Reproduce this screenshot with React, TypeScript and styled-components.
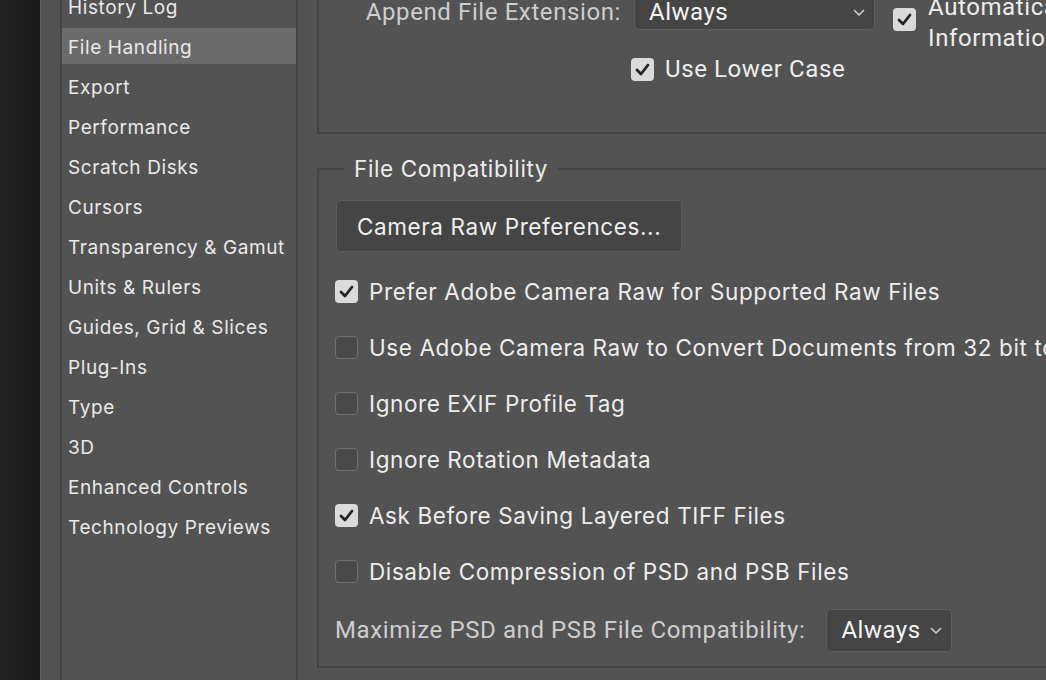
import React from "react";
import styled, { createGlobalStyle } from "styled-components";

const Global = createGlobalStyle`
  html, body { margin: 0; padding: 0; background: #535353; overflow: hidden; }
  #root { height: 680px; }
  * { box-sizing: border-box; }
`;

const Window = styled.div`
  display: flex;
  height: 680px;
  width: 100%;
  overflow: hidden;
  background: #535353;
  font-family: Inter, "Open Sans", sans-serif;
  color: #ebebeb;
`;

const Dock = styled.div`
  flex: none;
  width: 41px;
  background: linear-gradient(to right, #222222, #1a1a1a);
  border-right: 1px solid #5e5e5e;
`;

const SidebarPane = styled.div`
  flex: none;
  padding-left: 19px;
  display: flex;
`;

const NavList = styled.ul`
  list-style: none;
  margin: -12px 0 0;
  padding: 0;
  width: 238px;
  border-left: 2px solid #464646;
  border-right: 2px solid #464646;
`;

const NavItem = styled.li<{ $active?: boolean }>`
  height: 36px;
  margin-bottom: 4px;
  padding: 3px 0 0 6px;
  line-height: 33px;
  font-size: 19px;
  letter-spacing: 0.6px;
  color: #e9e9e9;
  background: ${(p) => (p.$active ? "#6a6a6a" : "transparent")};
  white-space: nowrap;
`;

const MainPane = styled.div`
  flex: 1;
  min-width: 0;
  padding-left: 19px;
  display: flex;
  flex-direction: column;
`;

const UpperGroup = styled.div`
  margin: -6px -60px 0 0;
  border-left: 2px solid #444444;
  border-bottom: 2px solid #444444;
  padding-bottom: 51px;
  display: grid;
  grid-template-columns: 315px 259px auto;
  grid-template-rows: 36px 24px;
  row-gap: 27px;
`;

const FieldLabel = styled.div<{ $align?: string }>`
  font-family: Roboto, "Liberation Sans", sans-serif;
  font-size: 24px;
  letter-spacing: 0.6px;
  color: #cdcdcd;
  white-space: nowrap;
  text-align: ${(p) => p.$align || "left"};
`;

const RightLabel = styled(FieldLabel)`
  padding-right: 13px;
  align-self: center;
`;

const Select = styled.div<{ $w: number; $h: number }>`
  width: ${(p) => p.$w}px;
  height: ${(p) => p.$h}px;
  display: flex;
  align-items: center;
  justify-content: space-between;
  padding: 0 9px 0 14px;
  background: #454545;
  border: 1px solid #5e5e5e;
  border-radius: 5px;
  font-family: Roboto, "Liberation Sans", sans-serif;
  font-size: 24px;
  letter-spacing: 0.5px;
  color: #f3f3f3;
  flex: none;
`;

const AutoItem = styled.div`
  display: flex;
  align-items: flex-start;
  gap: 12px;
  margin-top: -2px;
`;

const AutoText = styled.div`
  font-family: Roboto, "Liberation Sans", sans-serif;
  font-size: 24px;
  letter-spacing: 0.6px;
  line-height: 31px;
  color: #ececec;
  white-space: nowrap;
`;

const CheckRow = styled.div<{ $h?: number; $shift?: number }>`
  display: flex;
  align-items: center;
  gap: 11px;
  height: ${(p) => p.$h ?? 24}px;
  margin-left: ${(p) => p.$shift ?? 0}px;
`;

const Box = styled.span<{ $on?: boolean; $top?: number }>`
  flex: none;
  width: 23px;
  height: 23px;
  border-radius: 4px;
  display: flex;
  align-items: center;
  justify-content: center;
  margin-top: ${(p) => p.$top ?? 0}px;
  background: ${(p) => (p.$on ? "#dadada" : "#4a4a4a")};
  border: ${(p) => (p.$on ? "none" : "1.5px solid #707070")};
`;

const CheckText = styled.span<{ $condensed?: boolean }>`
  font-family: ${(p) =>
    p.$condensed ? 'Roboto, "Liberation Sans", sans-serif' : 'Inter, "Open Sans", sans-serif'};
  font-size: ${(p) => (p.$condensed ? 24 : 22.5)}px;
  letter-spacing: 0.6px;
  color: #ededed;
  white-space: nowrap;
`;

const Group = styled.fieldset`
  margin: 22px -60px 0 0;
  padding: 0 0 14px 16px;
  border: 2px solid #444444;
  min-width: 0;
`;

const Legend = styled.legend`
  margin-left: 9px;
  padding: 0 10px;
  font-size: 22.5px;
  letter-spacing: 0.6px;
  line-height: 26px;
  color: #ececec;
`;

const PushButton = styled.div`
  display: inline-flex;
  align-items: center;
  height: 52px;
  margin: 18px 0 0 1px;
  padding: 0 20px;
  background: #454545;
  border: 1px solid #5c5c5c;
  border-radius: 4px;
  font-size: 22.5px;
  letter-spacing: 0.6px;
  color: #efefef;
  white-space: nowrap;
`;

const Options = styled.div`
  margin-top: 11px;
  display: flex;
  flex-direction: column;
`;

const FooterRow = styled.div`
  display: flex;
  align-items: center;
  gap: 21px;
  height: 44px;
  margin-top: 9px;
`;

const Chevron = () => (
  <svg width="12" height="7" viewBox="0 0 12 7">
    <polyline points="1,1 6,6 11,1" fill="none" stroke="#d0d0d0" strokeWidth="1.5" />
  </svg>
);

const Tick = () => (
  <svg width="17" height="17" viewBox="0 0 17 17">
    <polyline
      points="3,9 7,13 14,4"
      fill="none"
      stroke="#232323"
      strokeWidth="2.8"
      strokeLinecap="round"
      strokeLinejoin="round"
    />
  </svg>
);

const Check = ({ on, top }: { on?: boolean; top?: number }) => (
  <Box $on={on} $top={top}>{on && <Tick />}</Box>
);

const nav = [
  "History Log",
  "File Handling",
  "Export",
  "Performance",
  "Scratch Disks",
  "Cursors",
  "Transparency & Gamut",
  "Units & Rulers",
  "Guides, Grid & Slices",
  "Plug-Ins",
  "Type",
  "3D",
  "Enhanced Controls",
  "Technology Previews",
];

const options: [string, boolean][] = [
  ["Prefer Adobe Camera Raw for Supported Raw Files", true],
  ["Use Adobe Camera Raw to Convert Documents from 32 bit to 16/8 bit", false],
  ["Ignore EXIF Profile Tag", false],
  ["Ignore Rotation Metadata", false],
  ["Ask Before Saving Layered TIFF Files", true],
  ["Disable Compression of PSD and PSB Files", false],
];

export default function App() {
  return (
    <>
      <Global />
      <Window>
        <Dock />
        <SidebarPane>
          <NavList>
            {nav.map((n) => (
              <NavItem key={n} $active={n === "File Handling"}>
                {n}
              </NavItem>
            ))}
          </NavList>
        </SidebarPane>
        <MainPane>
          <UpperGroup>
            <RightLabel $align="right">Append File Extension:</RightLabel>
            <Select $w={241} $h={36}>
              <span>Always</span>
              <Chevron />
            </Select>
            <AutoItem>
              <Check on top={16} />
              <AutoText>
                Automatically Save Recovery
                <br />
                Information Every:
              </AutoText>
            </AutoItem>
            <div />
            <CheckRow $shift={-3}>
              <Check on />
              <CheckText $condensed>Use Lower Case</CheckText>
            </CheckRow>
          </UpperGroup>
          <Group>
            <Legend>File Compatibility</Legend>
            <div>
              <PushButton>Camera Raw Preferences...</PushButton>
            </div>
            <Options>
              {options.map(([t, on]) => (
                <CheckRow key={t} $h={56}>
                  <Check on={on} />
                  <CheckText>{t}</CheckText>
                </CheckRow>
              ))}
            </Options>
            <FooterRow>
              <FieldLabel>Maximize PSD and PSB File Compatibility:</FieldLabel>
              <Select $w={126} $h={43}>
                <span>Always</span>
                <Chevron />
              </Select>
            </FooterRow>
          </Group>
        </MainPane>
      </Window>
    </>
  );
}
